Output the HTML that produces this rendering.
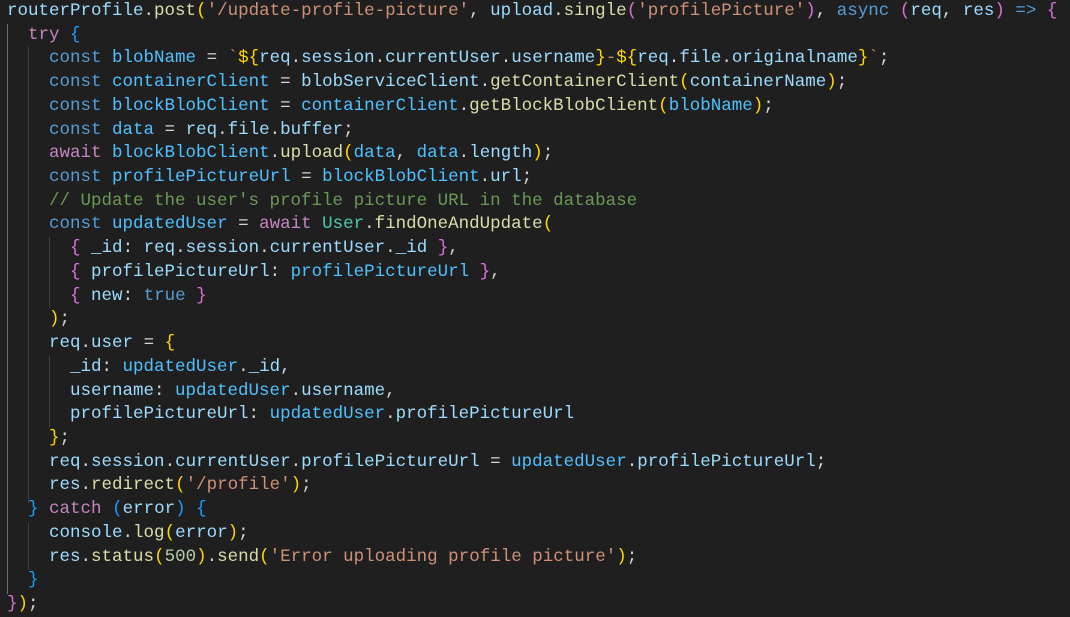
<!DOCTYPE html>
<html><head><meta charset="utf-8"><style>
html,body{margin:0;padding:0;background:#1f1f1f;width:1070px;height:613px;overflow:hidden}
#c{position:absolute;left:7px;top:0px;font-family:"Liberation Mono",monospace;font-size:17.5px;line-height:23.72px;color:#d4d4d4;white-space:pre}
.g{position:absolute;width:1px;background:#404040}
.v{color:#9cdcfe}.c{color:#4fc1ff}.f{color:#dcdcaa}.s{color:#ce9178}.k{color:#569cd6}.p{color:#c586c0}
.t{color:#4ec9b0}.n{color:#b5cea8}.m{color:#6a9955}.b1{color:#ffd700}.b2{color:#da70d6}.b3{color:#179fff}
</style></head><body>
<div class="g" style="left:7px;top:24px;height:570px;background:#707070"></div>
<div class="g" style="left:28px;top:47px;height:456px"></div>
<div class="g" style="left:28px;top:523px;height:47px"></div>
<div class="g" style="left:49px;top:237px;height:71px"></div>
<div class="g" style="left:49px;top:356px;height:71px"></div>
<div id="c"><span class="v">routerProfile</span>.<span class="f">post</span><span class="b1">(</span><span class="s">'/update-profile-picture'</span>, <span class="v">upload</span>.<span class="f">single</span><span class="b2">(</span><span class="s">'profilePicture'</span><span class="b2">)</span>, <span class="k">async</span> <span class="b2">(</span><span class="v">req</span>, <span class="v">res</span><span class="b2">)</span> <span class="k">=&gt;</span> <span class="b2">{</span>
  <span class="p">try</span> <span class="b3">{</span>
    <span class="k">const</span> <span class="c">blobName</span> = <span class="s">`</span><span class="b1">${</span><span class="v">req</span>.<span class="v">session</span>.<span class="v">currentUser</span>.<span class="v">username</span><span class="b1">}</span><span class="s">-</span><span class="b1">${</span><span class="v">req</span>.<span class="v">file</span>.<span class="v">originalname</span><span class="b1">}</span><span class="s">`</span>;
    <span class="k">const</span> <span class="c">containerClient</span> = <span class="v">blobServiceClient</span>.<span class="f">getContainerClient</span><span class="b1">(</span><span class="v">containerName</span><span class="b1">)</span>;
    <span class="k">const</span> <span class="c">blockBlobClient</span> = <span class="c">containerClient</span>.<span class="f">getBlockBlobClient</span><span class="b1">(</span><span class="c">blobName</span><span class="b1">)</span>;
    <span class="k">const</span> <span class="c">data</span> = <span class="v">req</span>.<span class="v">file</span>.<span class="v">buffer</span>;
    <span class="p">await</span> <span class="c">blockBlobClient</span>.<span class="f">upload</span><span class="b1">(</span><span class="c">data</span>, <span class="c">data</span>.<span class="v">length</span><span class="b1">)</span>;
    <span class="k">const</span> <span class="c">profilePictureUrl</span> = <span class="c">blockBlobClient</span>.<span class="v">url</span>;
    <span class="m">// Update the user's profile picture URL in the database</span>
    <span class="k">const</span> <span class="c">updatedUser</span> = <span class="p">await</span> <span class="t">User</span>.<span class="f">findOneAndUpdate</span><span class="b1">(</span>
      <span class="b2">{</span> <span class="v">_id</span>: <span class="v">req</span>.<span class="v">session</span>.<span class="v">currentUser</span>.<span class="v">_id</span> <span class="b2">}</span>,
      <span class="b2">{</span> <span class="v">profilePictureUrl</span>: <span class="c">profilePictureUrl</span> <span class="b2">}</span>,
      <span class="b2">{</span> <span class="v">new</span>: <span class="k">true</span> <span class="b2">}</span>
    <span class="b1">)</span>;
    <span class="v">req</span>.<span class="v">user</span> = <span class="b1">{</span>
      <span class="v">_id</span>: <span class="c">updatedUser</span>.<span class="v">_id</span>,
      <span class="v">username</span>: <span class="c">updatedUser</span>.<span class="v">username</span>,
      <span class="v">profilePictureUrl</span>: <span class="c">updatedUser</span>.<span class="v">profilePictureUrl</span>
    <span class="b1">}</span>;
    <span class="v">req</span>.<span class="v">session</span>.<span class="v">currentUser</span>.<span class="v">profilePictureUrl</span> = <span class="c">updatedUser</span>.<span class="v">profilePictureUrl</span>;
    <span class="v">res</span>.<span class="f">redirect</span><span class="b1">(</span><span class="s">'/profile'</span><span class="b1">)</span>;
  <span class="b3">}</span> <span class="p">catch</span> <span class="b3">(</span><span class="v">error</span><span class="b3">)</span> <span class="b3">{</span>
    <span class="v">console</span>.<span class="f">log</span><span class="b1">(</span><span class="v">error</span><span class="b1">)</span>;
    <span class="v">res</span>.<span class="f">status</span><span class="b1">(</span><span class="n">500</span><span class="b1">)</span>.<span class="f">send</span><span class="b1">(</span><span class="s">'Error uploading profile picture'</span><span class="b1">)</span>;
  <span class="b3">}</span>
<span class="b2">}</span><span class="b1">)</span>;</div>
</body></html>
